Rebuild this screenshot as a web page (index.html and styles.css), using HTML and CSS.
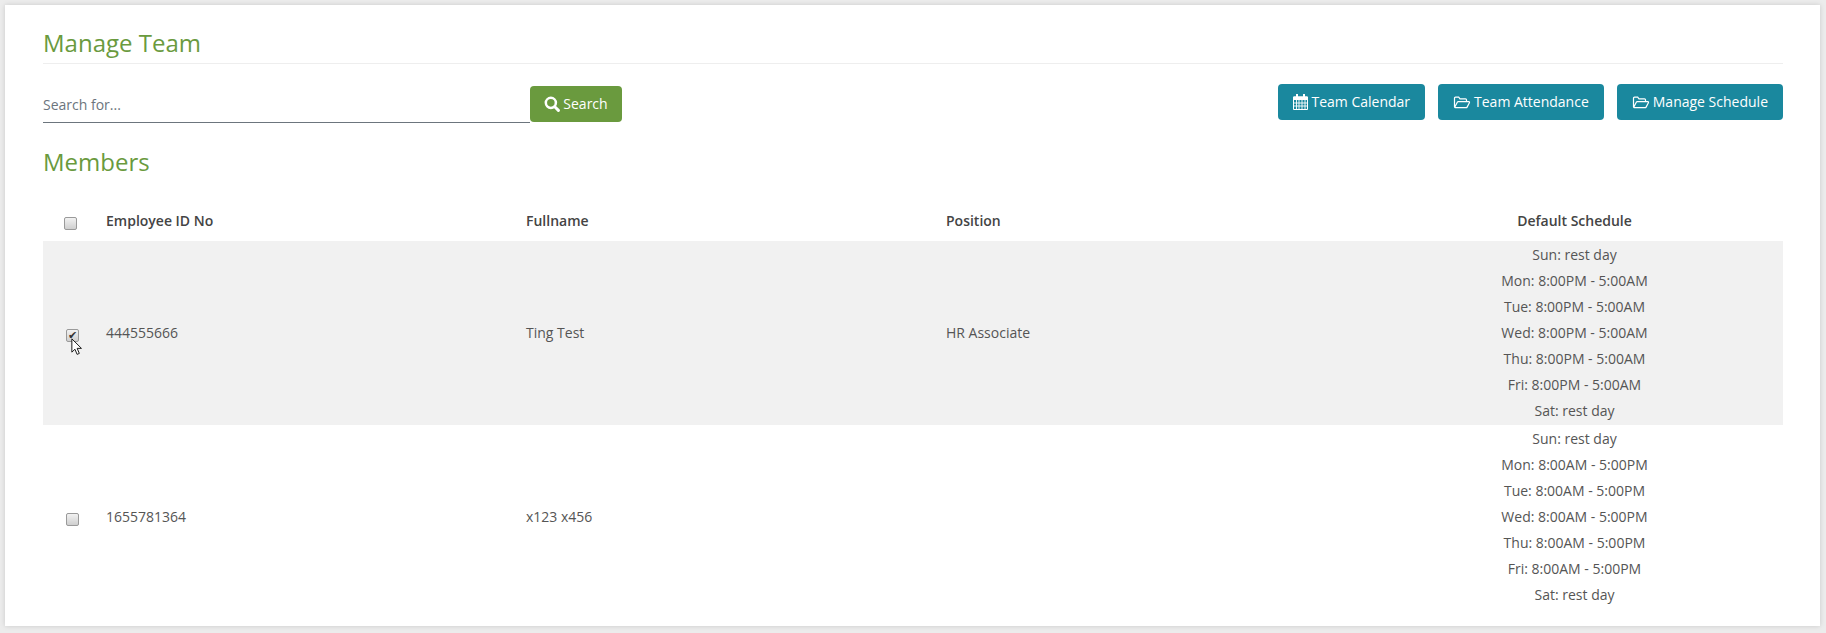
FILE: index.html
```html
<!DOCTYPE html>
<html lang="en">

<head>
    <meta charset="UTF-8">
    <meta name="viewport" content="width=device-width, initial-scale=1.0">
    <title>Manage Team</title>
    <link rel="stylesheet" href="styles.css">
</head>

<body>
    <div class="panel">
        <h2 class="page-title">Manage Team</h2>

        <div class="toolbar">
            <form class="search-form">
                <input class="search-input" type="text" placeholder="Search for...">
                <button class="btn btn-green" type="button">
                    <svg class="icon" viewBox="0 0 14 14" width="16" height="16">
                        <circle cx="6" cy="6" r="4.4" fill="none" stroke="#fff" stroke-width="2.2"/>
                        <path d="M9.4 9.4 L12.6 12.6" stroke="#fff" stroke-width="2.6" stroke-linecap="round"/>
                    </svg>
                    Search
                </button>
            </form>
            <div class="actions">
                <button class="btn btn-teal" type="button">
                    <svg class="icon" viewBox="0 0 15 16" width="15" height="16">
                        <path d="M.5 3h14v12.5H.5z" fill="none" stroke="#fff"/>
                        <path d="M.5 2.5h14v3.5H.5z" fill="#fff"/>
                        <path d="M4 0v3.5M11 0v3.5" stroke="#fff" stroke-width="2"/>
                        <path d="M.5 9h14M.5 12h14M3.5 6v9M6 6v9M9 6v9M12 6v9" stroke="#fff" stroke-width=".9"/>
                    </svg>
                    Team Calendar
                </button>
                <button class="btn btn-teal" type="button">
                    <svg class="icon" viewBox="0 0 18 15" width="18" height="15">
                        <path d="M1.5 12V3.2q0-1 1-1h3.2l1.3 1.6h5.5q1 0 1 1v1.7M1.6 12.6l2.7-5.3q.3-.6 1-.6h10.4q1.2 0 .7 1l-2.3 4.4q-.3.6-1 .6H2.3q-.7 0-.7-.7z" fill="none" stroke="#fff" stroke-width="1.2"/>
                    </svg>
                    Team Attendance
                </button>
                <button class="btn btn-teal" type="button">
                    <svg class="icon" viewBox="0 0 18 15" width="18" height="15">
                        <path d="M1.5 12V3.2q0-1 1-1h3.2l1.3 1.6h5.5q1 0 1 1v1.7M1.6 12.6l2.7-5.3q.3-.6 1-.6h10.4q1.2 0 .7 1l-2.3 4.4q-.3.6-1 .6H2.3q-.7 0-.7-.7z" fill="none" stroke="#fff" stroke-width="1.2"/>
                    </svg>
                    Manage Schedule
                </button>
            </div>
        </div>

        <h2 class="section-title">Members</h2>

        <table class="members">
            <thead>
                <tr>
                    <th class="col-check"><input type="checkbox"></th>
                    <th class="col-id">Employee ID No</th>
                    <th class="col-name">Fullname</th>
                    <th class="col-position">Position</th>
                    <th class="col-schedule">Default Schedule</th>
                </tr>
            </thead>
            <tbody>
                <tr class="row-active">
                    <td class="col-check">
                        <span class="check-wrap">
                            <input type="checkbox" checked>
                            <svg class="cursor" viewBox="0 0 14 21" width="12" height="18">
                                <path d="M1 1v15.5l3.6-3.4 2.5 6 2.6-1.1-2.5-5.9h5z" fill="#fff" stroke="#111" stroke-width="1.1"/>
                            </svg>
                        </span>
                    </td>
                    <td>444555666</td>
                    <td>Ting Test</td>
                    <td>HR Associate</td>
                    <td class="col-schedule">
                        <div>Sun: rest day</div>
                        <div>Mon: 8:00PM - 5:00AM</div>
                        <div>Tue: 8:00PM - 5:00AM</div>
                        <div>Wed: 8:00PM - 5:00AM</div>
                        <div>Thu: 8:00PM - 5:00AM</div>
                        <div>Fri: 8:00PM - 5:00AM</div>
                        <div>Sat: rest day</div>
                    </td>
                </tr>
                <tr>
                    <td class="col-check"><input type="checkbox"></td>
                    <td>1655781364</td>
                    <td>x123 x456</td>
                    <td></td>
                    <td class="col-schedule">
                        <div>Sun: rest day</div>
                        <div>Mon: 8:00AM - 5:00PM</div>
                        <div>Tue: 8:00AM - 5:00PM</div>
                        <div>Wed: 8:00AM - 5:00PM</div>
                        <div>Thu: 8:00AM - 5:00PM</div>
                        <div>Fri: 8:00AM - 5:00PM</div>
                        <div>Sat: rest day</div>
                    </td>
                </tr>
            </tbody>
        </table>
    </div>
</body>

</html>
```

FILE: styles.css
```css
* {
    margin: 0;
    padding: 0;
    box-sizing: border-box;
}

html,
body {
    height: 100%;
    overflow: hidden;
}

body {
    font-family: 'Open Sans', sans-serif;
    font-size: 14px;
    line-height: 26px;
    background-color: #ececec;
    color: #555;
    padding: 5px 6px 7px 5px;
}

.panel {
    background: #fff;
    height: 621px;
    padding: 0 37px 0 38px;
    box-shadow: 0 0 5px rgba(0, 0, 0, 0.15);
}

.page-title {
    font-size: 24px;
    font-weight: 400;
    line-height: 34px;
    color: #6a9a3e;
    padding-top: 21px;
    padding-bottom: 3px;
    border-bottom: 1px solid #eee;
    box-sizing: content-box;
    height: 34px;
}

.toolbar {
    display: flex;
    justify-content: space-between;
    padding-top: 20px;
}

.search-form {
    display: flex;
    padding-top: 2px;
}

.search-input {
    width: 487px;
    height: 37px;
    border: 0;
    border-bottom: 1px solid #6c757d;
    font: inherit;
    color: #555;
    outline: none;
}

.search-input::placeholder {
    color: #6c757d;
}

.actions {
    display: flex;
    gap: 13px;
}

.btn {
    display: flex;
    align-items: center;
    justify-content: center;
    gap: 3px;
    height: 36px;
    border: 0;
    border-radius: 4px;
    font: inherit;
    color: #fff;
    padding: 0 15px;
}

.btn-green {
    background: #6a9a3e;
    width: 92px;
    padding: 0;
}

.btn-teal {
    background: #1a889e;
}

.section-title {
    font-size: 24px;
    font-weight: 400;
    line-height: 34px;
    color: #6a9a3e;
    margin-top: 22px;
}

.members {
    width: 100%;
    margin-top: 22px;
    border-collapse: collapse;
    table-layout: fixed;
}

.members th {
    height: 40px;
    font-weight: 600;
    text-align: left;
    color: #444;
}

.members tbody tr {
    height: 184px;
}

.row-active {
    background: #f1f1f1;
}

.col-check {
    width: 63px;
}

.col-id,
.col-name,
.col-position {
    width: 420px;
}

.members th.col-schedule,
.members td.col-schedule {
    text-align: center;
}

.members th.col-check {
    padding-left: 21px;
}

.members td.col-check {
    padding-left: 23px;
}

.col-check input {
    appearance: none;
    display: block;
    position: relative;
    width: 13px;
    height: 13px;
    margin-top: 5px;
    border: 1px solid #9a9a9a;
    border-radius: 2px;
    background: linear-gradient(#f2f2f2, #cfcfcf);
}

.col-check input:checked::after {
    content: '\2714';
    position: absolute;
    left: 0;
    top: 0;
    width: 11px;
    font-size: 11px;
    line-height: 11px;
    text-align: center;
    color: #333;
}

.check-wrap {
    position: relative;
    display: block;
}

.cursor {
    position: absolute;
    left: 5px;
    top: 9px;
}
```
